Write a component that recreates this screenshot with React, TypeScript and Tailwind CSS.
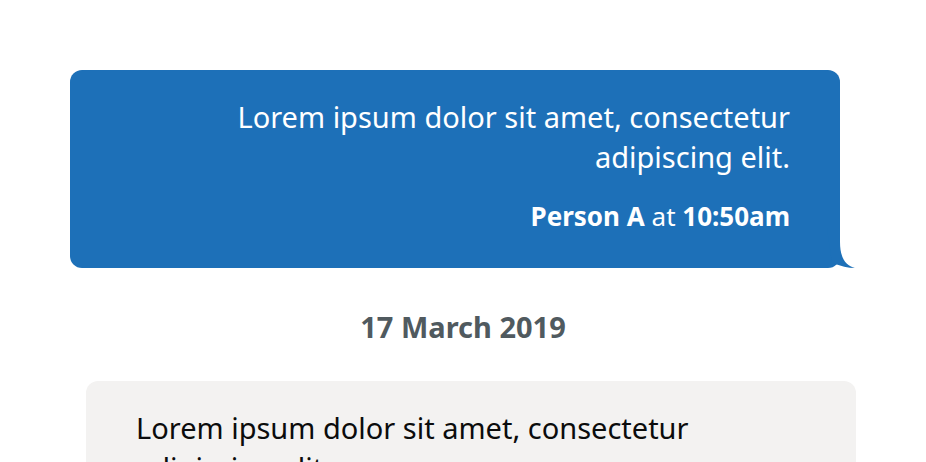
import React from "react";

export default function App() {
  return (
    <div className="min-h-[462px] bg-white" style={{ fontFamily: '"Noto Sans", Arial, sans-serif' }}>
      <div className="mx-[70px] pt-[70px] flex flex-col">
        <div className="relative mr-[16px] rounded-[12px] bg-[#1d70b8] px-[50px] pt-[27px] pb-[37px] text-right text-white">
          <p className="text-[29px] leading-[40px]">
            Lorem ipsum dolor sit amet, consectetur
            <br />
            adipiscing elit.
          </p>
          <p className="mt-[24px] text-[26px] leading-[30px]">
            <span className="font-bold">Person A</span> at <span className="font-bold">10:50am</span>
          </p>
          <svg
            className="absolute right-[-15px] bottom-0"
            width="36"
            height="40"
            viewBox="0 0 36 40"
          >
            <path d="M8 0 L21 0 L21 14 C21 30 27 38 36 40 C29 40 22 38 13 35 Z" fill="#1d70b8" />
          </svg>
        </div>
        <p className="mt-[44px] text-center text-[29px] font-bold leading-[30px] text-[#505a5f]">17 March 2019</p>
        <div className="ml-[16px] mt-[39px] rounded-[12px] bg-[#f3f2f1] px-[50px] pt-[27px] pb-[37px] text-[#0b0c0c]">
          <p className="text-[29px] leading-[40px]">
            Lorem ipsum dolor sit amet, consectetur
            <br />
            adipiscing elit.
          </p>
        </div>
      </div>
    </div>
  );
}
